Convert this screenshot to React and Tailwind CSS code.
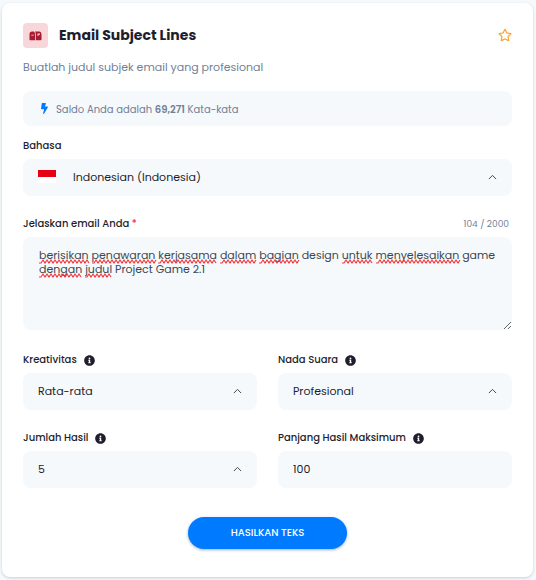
import { useLayoutEffect, useRef, useState } from 'react';
import { FaBolt, FaInfoCircle, FaRegStar } from 'react-icons/fa';

const SAMPLE =
  'berisikan penawaran kerjasama dalam bagian design untuk menyelesaikan game dengan judul Project Game 2.1';

// words the spell checker accepts
const KNOWN_WORDS = ['design', 'game', 'Project', 'Game', '2.1'];

const fieldClass =
  'block h-[37px] w-full appearance-none rounded-lg bg-[#f5f9fc] pr-10 text-[11px] text-[#1e1e2d] outline-none focus:ring-1 focus:ring-[#007bff]';

const editorTextClass = 'px-4 py-[11px] text-[11px] leading-[14px] whitespace-pre-wrap break-words';

function MailboxIcon() {
  return (
    <svg viewBox="0 0 26 20" className="h-[10px] w-[13px]" aria-hidden="true">
      <path
        fill="#a81c33"
        d="M6 1C3 1 1 3 1 6.500V17c0 1 .6 1.500 1.500 1.500H12V6.500C12 4 11 2 9.500 1H6Zm-1.500 6.500h5v1.500h-5v-1.500Z"
      />
      <path
        fill="#a81c33"
        fillRule="evenodd"
        d="M12 1h8c3 0 5 2.500 5 5.500V17c0 1-.6 1.500-1.500 1.500H13.500V6.500C13.500 4 13 2.200 12 1Zm5 4v5h2V7.500H22V5h-5Z"
      />
    </svg>
  );
}

function Chevron() {
  return (
    <svg
      viewBox="0 0 10 6"
      className="pointer-events-none absolute top-[15px] right-[15px] h-[6px] w-[9px]"
      fill="none"
      stroke="#444950"
      strokeWidth="1.1"
      aria-hidden="true"
    >
      <path d="M1 5.300 5 1.200 9 5.300" />
    </svg>
  );
}

function Label({ htmlFor, children, info }) {
  return (
    <div className="mb-[5px] flex h-4 items-center gap-[7px]">
      <label htmlFor={htmlFor} className="text-[10px] leading-4 font-medium text-[#1e1e2d]">
        {children}
      </label>
      {info && <FaInfoCircle className="size-[11px] text-[#1e1e2d]" title={info} />}
    </div>
  );
}

function SelectField({ id, label, info, options }) {
  return (
    <div>
      <Label htmlFor={id} info={info}>{label}</Label>
      <div className="relative">
        <select id={id} className={`${fieldClass} pl-[15px]`}>
          {options.map((o) => (
            <option key={o}>{o}</option>
          ))}
        </select>
        <Chevron />
      </div>
    </div>
  );
}

// Lays the text out in a throwaway copy of the editor and returns a box per misspelt word
function measureMarks(host, text) {
  const copy = document.createElement('div');
  copy.className = `absolute inset-x-0 top-0 invisible ${editorTextClass}`;
  text.split(/(\s+)/).forEach((part) => {
    const span = document.createElement('span');
    span.textContent = part;
    if (part.trim() && !KNOWN_WORDS.includes(part)) span.dataset.mark = '1';
    copy.appendChild(span);
  });
  host.appendChild(copy);
  const marks = [...copy.querySelectorAll('[data-mark]')].map((s) => ({
    x: s.offsetLeft,
    y: s.offsetTop + s.offsetHeight / 2,
    width: s.offsetWidth,
  }));
  copy.remove();
  return marks;
}

function wavePath({ x, y, width }) {
  let d = `M${x} ${y + 8}`;
  for (let i = 2, up = false; i <= width; i += 2, up = !up) {
    d += ` L${x + i} ${y + (up ? 5 : 8)}`;
  }
  return d;
}

function Editor({ id, value, onChange }) {
  const hostRef = useRef(null);
  const [marks, setMarks] = useState([]);

  useLayoutEffect(() => {
    const host = hostRef.current;
    const update = () => setMarks(measureMarks(host, value));
    update();
    const observer = new ResizeObserver(update);
    observer.observe(host);
    return () => observer.disconnect();
  }, [value]);

  return (
    <div ref={hostRef} className="relative">
      <textarea
        id={id}
        maxLength={2000}
        spellCheck={false}
        value={value}
        onChange={(e) => onChange(e.target.value)}
        className={`block h-[93px] w-full resize-y rounded-lg bg-[#f5f9fc] text-[#40464f] outline-none ${editorTextClass}`}
      />
      <svg
        className="pointer-events-none absolute inset-0 size-full"
        fill="none"
        stroke="#f5393e"
        strokeWidth="1.2"
        aria-hidden="true"
      >
        {marks.map((m) => (
          <path key={`${m.x}-${m.y}`} d={wavePath(m)} />
        ))}
      </svg>
    </div>
  );
}

export default function App() {
  const [text, setText] = useState(SAMPLE);
  const [maxLength, setMaxLength] = useState('100');

  return (
    <div className="min-h-screen bg-[#f5f9fc] py-[3px] pr-[3px] pl-[2px] font-['Poppins','Inter',sans-serif]">
      <form
        onSubmit={(e) => e.preventDefault()}
        className="rounded-lg bg-white px-[21px] pt-5 pb-7 shadow-[0_1px_3px_rgba(30,40,60,0.2)]"
      >
        <header className="flex items-start">
          <span className="flex size-[25px] items-center justify-center rounded bg-[#f8d7da]">
            <MailboxIcon />
          </span>
          <h1 className="ml-[11px] flex-1 text-sm leading-6 font-bold text-[#1e1e2d]">
            Email Subject Lines
          </h1>
          <button type="button" aria-label="Favorit" className="flex h-6 items-center text-[#ff9f2d]">
            <FaRegStar className="size-[14px]" />
          </button>
        </header>

        <p className="mt-[11px] text-[11px] leading-4 text-[#728096]">
          Buatlah judul subjek email yang profesional
        </p>

        <div className="mt-4 flex h-[35px] items-center gap-1.5 rounded-lg bg-[#f5f9fc] px-4 text-[10px] text-[#728096]">
          <FaBolt className="size-[11px] text-[#007bff]" />
          <span className="pt-0.5">
            Saldo Anda adalah <b className="font-semibold">69,271</b> Kata-kata
          </span>
        </div>

        <div className="mt-3">
          <Label htmlFor="language">Bahasa</Label>
          <div className="relative">
            <span className="pointer-events-none absolute top-[11px] left-[15px] h-[13px] w-[18px] border-t-[7px] border-[#e70011] bg-white" />
            <select id="language" className={`${fieldClass} pl-[50px]`}>
              <option>Indonesian (Indonesia)</option>
              <option>English (USA)</option>
            </select>
            <Chevron />
          </div>
        </div>

        <div className="mt-5">
          <div className="flex items-start justify-between">
            <Label htmlFor="description">
              Jelaskan email Anda <span className="text-[#f5365c]">*</span>
            </Label>
            <span className="mr-[3px] text-[9px] leading-4 text-[#728096]">{text.length} / 2000</span>
          </div>
          <Editor id="description" value={text} onChange={setText} />
        </div>

        <div className="mt-[22px] grid grid-cols-2 gap-x-[21px] gap-y-5">
          <SelectField
            id="creativity"
            label="Kreativitas"
            info="Tingkat kreativitas"
            options={['Rata-rata', 'Tinggi', 'Rendah']}
          />
          <SelectField
            id="tone"
            label="Nada Suara"
            info="Nada suara hasil"
            options={['Profesional', 'Santai']}
          />
          <SelectField
            id="results"
            label="Jumlah Hasil"
            info="Jumlah hasil"
            options={['5', '4', '3', '2', '1']}
          />
          <div>
            <Label htmlFor="max-length" info="Panjang hasil maksimum">Panjang Hasil Maksimum</Label>
            <input
              id="max-length"
              inputMode="numeric"
              value={maxLength}
              onChange={(e) => setMaxLength(e.target.value)}
              className={`${fieldClass} pl-[15px]`}
            />
          </div>
        </div>

        <div className="mt-[29px] flex justify-center">
          <button
            type="submit"
            className="h-8 rounded-full bg-[#007bff] px-[43px] pb-0.5 text-[10px] font-medium text-white shadow-[0_1px_3px_rgba(0,60,130,0.4)] hover:bg-[#006fe6]"
          >
            HASILKAN TEKS
          </button>
        </div>
      </form>
    </div>
  );
}
